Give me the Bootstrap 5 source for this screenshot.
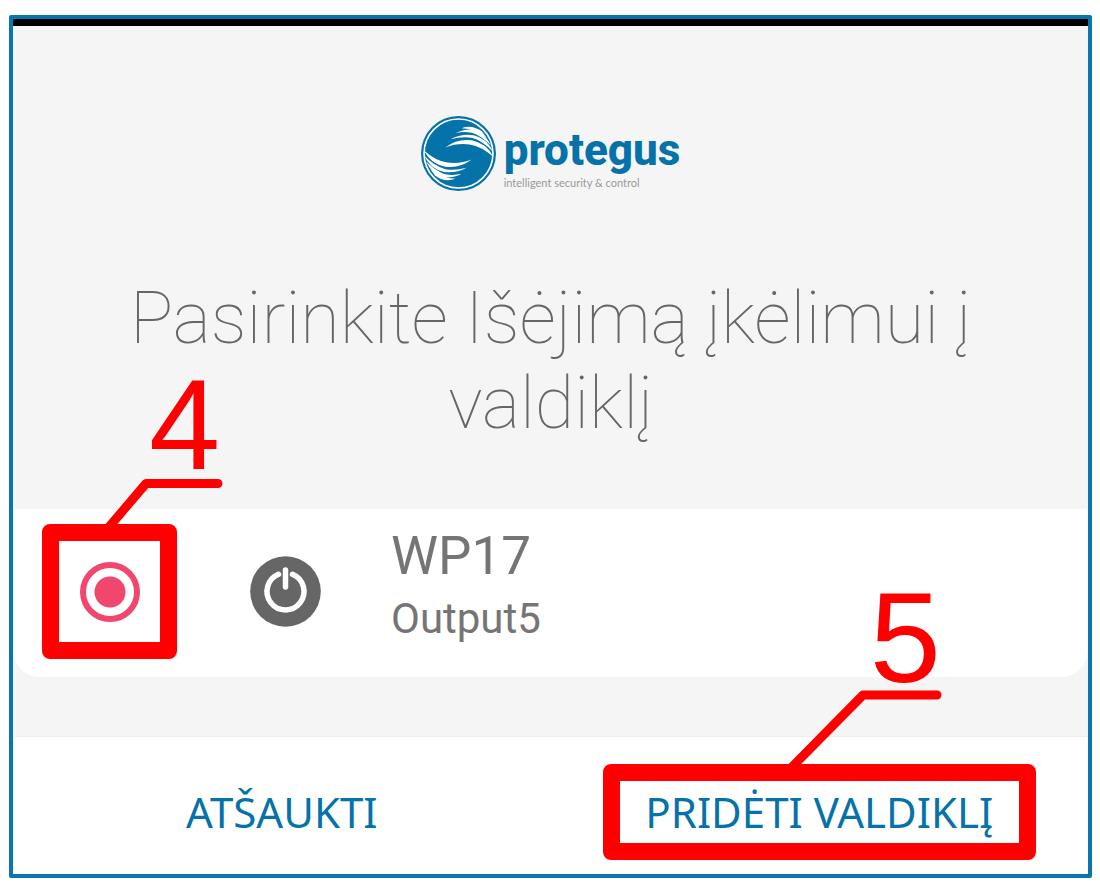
<!DOCTYPE html>
<html lang="lt">
<head>
<meta charset="utf-8">
<meta name="viewport" content="width=device-width, initial-scale=1">
<title>Protegus</title>
<link href="https://cdn.jsdelivr.net/npm/bootstrap@5.3.0/dist/css/bootstrap.min.css" rel="stylesheet">
<style>
  :root { --brand: #0572a9; --panel: #f5f5f5; --ink: #757575; --callout: #f00; }
  body { padding: 15px 8px 12px 9px; background: #fff; font-family: Roboto, sans-serif; }
  .app-frame { border: 4px solid #0b76ac; border-radius: 2px; background: var(--panel); }
  .status-strip { height: 7px; background: #000; }
  .app-header { padding: 90px 64px 63px; }
  .brand-mark { width: 75px; height: 75px; }
  .brand-text { color: var(--brand); margin-left: 8px; padding-top: 9px; }
  .brand-name { font-size: 44px; line-height: 50px; font-weight: 800; }
  .brand-tag { font: 11px/16px Lato, sans-serif; color: #999; }
  .page-title { font-size: 72px; line-height: 85px; font-weight: 100; color: #666; margin-top: 85px; }
  .output-row { padding: 15px 29px 18px; border-radius: 0 0 27px 27px; }
  .pick-box, .action-box { position: relative; border: 17px solid var(--callout); border-radius: 8px; }
  .pick-box { width: 135px; height: 135px; }
  .pick-radio { appearance: none; width: 60px; height: 60px; margin: 0; border: 6px solid #f1476f; border-radius: 50%;
    background: radial-gradient(circle, #f1476f 15px, #fff 16px); }
  .power-icon { width: 71px; height: 71px; margin-left: 73px; }
  .output-text { margin-left: 70px; padding-bottom: 9px; color: var(--ink); }
  .output-name { font-size: 53px; line-height: 64px; }
  .output-port { font-size: 42px; line-height: 62px; }
  .action-bar { margin-top: 59px; padding: 27px 0 14px; border-top: 1px solid #efefef; }
  .action-box { width: 433px; height: 96px; }
  .action-btn { color: var(--brand); font: 450 42px/56px "Noto Sans", sans-serif; white-space: nowrap; }
  /* Numbered callouts that lie over the screen */
  .callout-num { position: absolute; font: 128px/88px "Liberation Sans", sans-serif; color: var(--callout); pointer-events: none; }
  .callout-line { position: absolute; fill: none; stroke: var(--callout); stroke-width: 9; stroke-linecap: round; stroke-linejoin: round; pointer-events: none; }
  .num-pick { left: 90px; top: -160px; }
  .line-pick { left: 45px; top: -63px; }
  .num-action { left: 250px; top: -187px; }
  .line-action { left: 160px; top: -91px; }
</style>
</head>
<body>
<main class="app-frame">
  <div class="status-strip"></div>
  <header class="app-header text-center">
    <div class="d-flex justify-content-center">
      <svg class="brand-mark" viewBox="0 0 74 74" aria-hidden="true">
        <circle cx="37" cy="37" r="37" fill="#0572a9"/>
        <circle cx="37" cy="37" r="34" fill="none" stroke="#fff" stroke-width="1.6"/>
        <g id="wing" fill="#fff">
          <path d="M24 31Q36 22 50 24Q65 27 71 40Q60 30 48 28Q35 26.500 24 31Z"/>
          <path d="M29 23Q40 17 52 19Q65 22 71 35Q60 24 50 21.500Q40 20 29 23Z"/>
          <path d="M34 17Q44 11.500 54 14Q64 18 69 29Q58 18.500 50 16.500Q42 15 34 17Z"/>
          <path d="M40 12Q50 8 60 15L65 22Q54 12.500 40 12Z"/>
        </g>
        <use href="#wing" transform="rotate(180 37 37)"/>
      </svg>
      <div class="brand-text text-start">
        <div class="brand-name">protegus</div>
        <div class="brand-tag">intelligent security &amp; control</div>
      </div>
    </div>
    <h1 class="page-title mb-0">Pasirinkite Išėjimą įkėlimui į valdiklį</h1>
  </header>

  <section class="output-row bg-white d-flex align-items-stretch">
    <div class="pick-box d-flex align-items-center justify-content-center flex-shrink-0">
      <input class="pick-radio" type="radio" name="output" id="output5" checked>
      <svg class="callout-line line-pick" width="140" height="60" viewBox="0 0 140 60" aria-hidden="true"><path d="M5 49L42 5.500H114"/></svg>
      <span class="callout-num num-pick">4</span>
    </div>
    <label class="d-flex align-items-center" for="output5">
      <svg class="power-icon flex-shrink-0" viewBox="0 0 71 71" aria-hidden="true">
        <circle cx="35.500" cy="35.500" r="35.300" fill="#666"/>
        <path d="M28.500 18.300A18.500 18.500 0 1 0 42.500 18.300M35.500 14V31" fill="none" stroke="#fff" stroke-width="5.500" stroke-linecap="round"/>
      </svg>
      <span class="output-text">
        <span class="output-name d-block">WP17</span>
        <span class="output-port d-block">Output5</span>
      </span>
    </label>
  </section>

  <footer class="action-bar bg-white">
    <div class="row g-0 align-items-center">
      <div class="col-6 text-center">
        <button type="button" class="action-btn btn border-0 p-0">ATŠAUKTI</button>
      </div>
      <div class="col-6 d-flex justify-content-center">
        <div class="action-box d-flex align-items-center justify-content-center">
          <button type="button" class="action-btn btn border-0 p-0">PRIDĖTI VALDIKLĮ</button>
          <svg class="callout-line line-action" width="180" height="90" viewBox="0 0 180 90" aria-hidden="true"><path d="M11 78L83 5H157"/></svg>
          <span class="callout-num num-action">5</span>
        </div>
      </div>
    </div>
  </footer>
</main>
<script src="https://cdn.jsdelivr.net/npm/bootstrap@5.3.0/dist/js/bootstrap.bundle.min.js"></script>
</body>
</html>
